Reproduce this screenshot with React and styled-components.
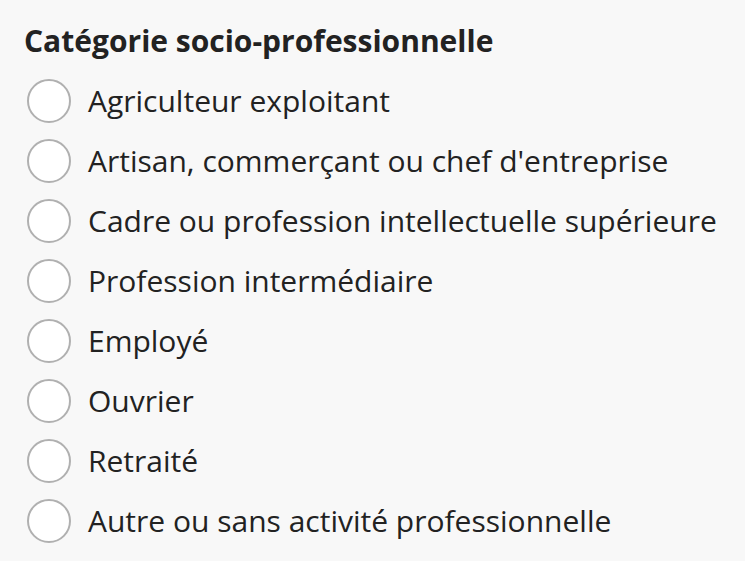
import React from "react";
import styled, { createGlobalStyle } from "styled-components";

const Global = createGlobalStyle`
  html, body { margin: 0; padding: 0; background: #f8f8f8; }
  body { font-family: "Open Sans", "Noto Sans", sans-serif; color: #222; }
`;

const Fieldset = styled.fieldset`
  border: 0;
  margin: 0;
  padding: 21px 24px 0 24px;
  display: flex;
  flex-direction: column;
`;

const Legend = styled.legend`
  padding: 0;
  font-size: 30px;
  font-weight: 700;
  line-height: 40px;
  margin-bottom: 18px;
  color: #222;
  float: left;
  width: 100%;
`;

const List = styled.div`
  display: flex;
  flex-direction: column;
  gap: 16px;
`;

const Option = styled.label`
  display: flex;
  align-items: center;
  gap: 17px;
  height: 44px;
  padding-left: 3px;
  cursor: pointer;
`;

const Radio = styled.input.attrs({ type: "radio" })`
  appearance: none;
  margin: 0;
  width: 44px;
  height: 44px;
  border-radius: 50%;
  border: 2px solid #b0b0b0;
  background: #fff;
  box-sizing: border-box;
  flex: none;
`;

const Text = styled.span`
  font-size: 30px;
  line-height: 40px;
  color: #222;
  white-space: nowrap;
`;

const options = [
  "Agriculteur exploitant",
  "Artisan, commerçant ou chef d'entreprise",
  "Cadre ou profession intellectuelle supérieure",
  "Profession intermédiaire",
  "Employé",
  "Ouvrier",
  "Retraité",
  "Autre ou sans activité professionnelle",
];

export default function App() {
  return (
    <>
      <Global />
      <Fieldset>
        <Legend>Catégorie socio-professionnelle</Legend>
        <List>
          {options.map((o) => (
            <Option key={o}>
              <Radio name="csp" />
              <Text>{o}</Text>
            </Option>
          ))}
        </List>
      </Fieldset>
    </>
  );
}
